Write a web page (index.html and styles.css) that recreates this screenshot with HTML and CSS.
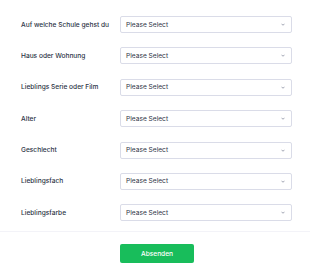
FILE: index.html
```html
<!DOCTYPE html>
<html lang="de">
<head>
<meta charset="utf-8">
<link rel="stylesheet" href="styles.css">
</head>
<body>
<form class="form">
  <div class="fields">
    <div class="row"><label class="label">Auf welche Schule gehst du</label><div class="select"><span>Please Select</span><svg class="chev" viewBox="0 0 8 5"><path d="M1 1l3 3 3-3" fill="none" stroke="#7a7f93" stroke-width="1.4"/></svg></div></div>
    <div class="row"><label class="label">Haus oder Wohnung</label><div class="select"><span>Please Select</span><svg class="chev" viewBox="0 0 8 5"><path d="M1 1l3 3 3-3" fill="none" stroke="#7a7f93" stroke-width="1.4"/></svg></div></div>
    <div class="row"><label class="label">Lieblings Serie oder Film</label><div class="select"><span>Please Select</span><svg class="chev" viewBox="0 0 8 5"><path d="M1 1l3 3 3-3" fill="none" stroke="#7a7f93" stroke-width="1.4"/></svg></div></div>
    <div class="row"><label class="label">Alter</label><div class="select"><span>Please Select</span><svg class="chev" viewBox="0 0 8 5"><path d="M1 1l3 3 3-3" fill="none" stroke="#7a7f93" stroke-width="1.4"/></svg></div></div>
    <div class="row"><label class="label">Geschlecht</label><div class="select"><span>Please Select</span><svg class="chev" viewBox="0 0 8 5"><path d="M1 1l3 3 3-3" fill="none" stroke="#7a7f93" stroke-width="1.4"/></svg></div></div>
    <div class="row"><label class="label">Lieblingsfach</label><div class="select"><span>Please Select</span><svg class="chev" viewBox="0 0 8 5"><path d="M1 1l3 3 3-3" fill="none" stroke="#7a7f93" stroke-width="1.4"/></svg></div></div>
    <div class="row"><label class="label">Lieblingsfarbe</label><div class="select"><span>Please Select</span><svg class="chev" viewBox="0 0 8 5"><path d="M1 1l3 3 3-3" fill="none" stroke="#7a7f93" stroke-width="1.4"/></svg></div></div>
  </div>
  <div class="actions">
    <button type="button" class="submit">Absenden</button>
  </div>
</form>
</body>
</html>
```
FILE: styles.css
```css
html, body {
  margin: 0;
  padding: 0;
  background: #ffffff;
}
body {
  font-family: Inter, "Noto Sans", sans-serif;
  color: #2c3345;
}
.form {
  width: 310px;
}
.fields {
  padding: 16px 18px 10px 21px;
  display: flex;
  flex-direction: column;
  gap: 14.4px;
}
.row {
  display: flex;
  align-items: center;
  height: 17px;
}
.label {
  width: 99px;
  flex: none;
  font-size: 6.6px;
  font-weight: 500;
  color: #2c3345;
  white-space: nowrap;
}
.select {
  width: 172px;
  height: 17px;
  box-sizing: border-box;
  border: 1px solid #dadce8;
  border-radius: 2px;
  display: flex;
  align-items: center;
  justify-content: space-between;
  padding: 0 6px 0 5px;
  font-size: 6.6px;
  color: #2c3345;
  background: #fff;
}
.chev {
  width: 4px;
  height: 3px;
}
.actions {
  border-top: 1px solid #f3f3f8;
  padding-top: 12px;
  display: flex;
  padding-left: 120px;
}
.submit {
  width: 74px;
  height: 19px;
  border: none;
  border-radius: 2px;
  background: #18bd5b;
  color: #ffffff;
  font-family: Inter, "Noto Sans", sans-serif;
  font-size: 6.6px;
  font-weight: 500;
  padding: 0;
}
```
